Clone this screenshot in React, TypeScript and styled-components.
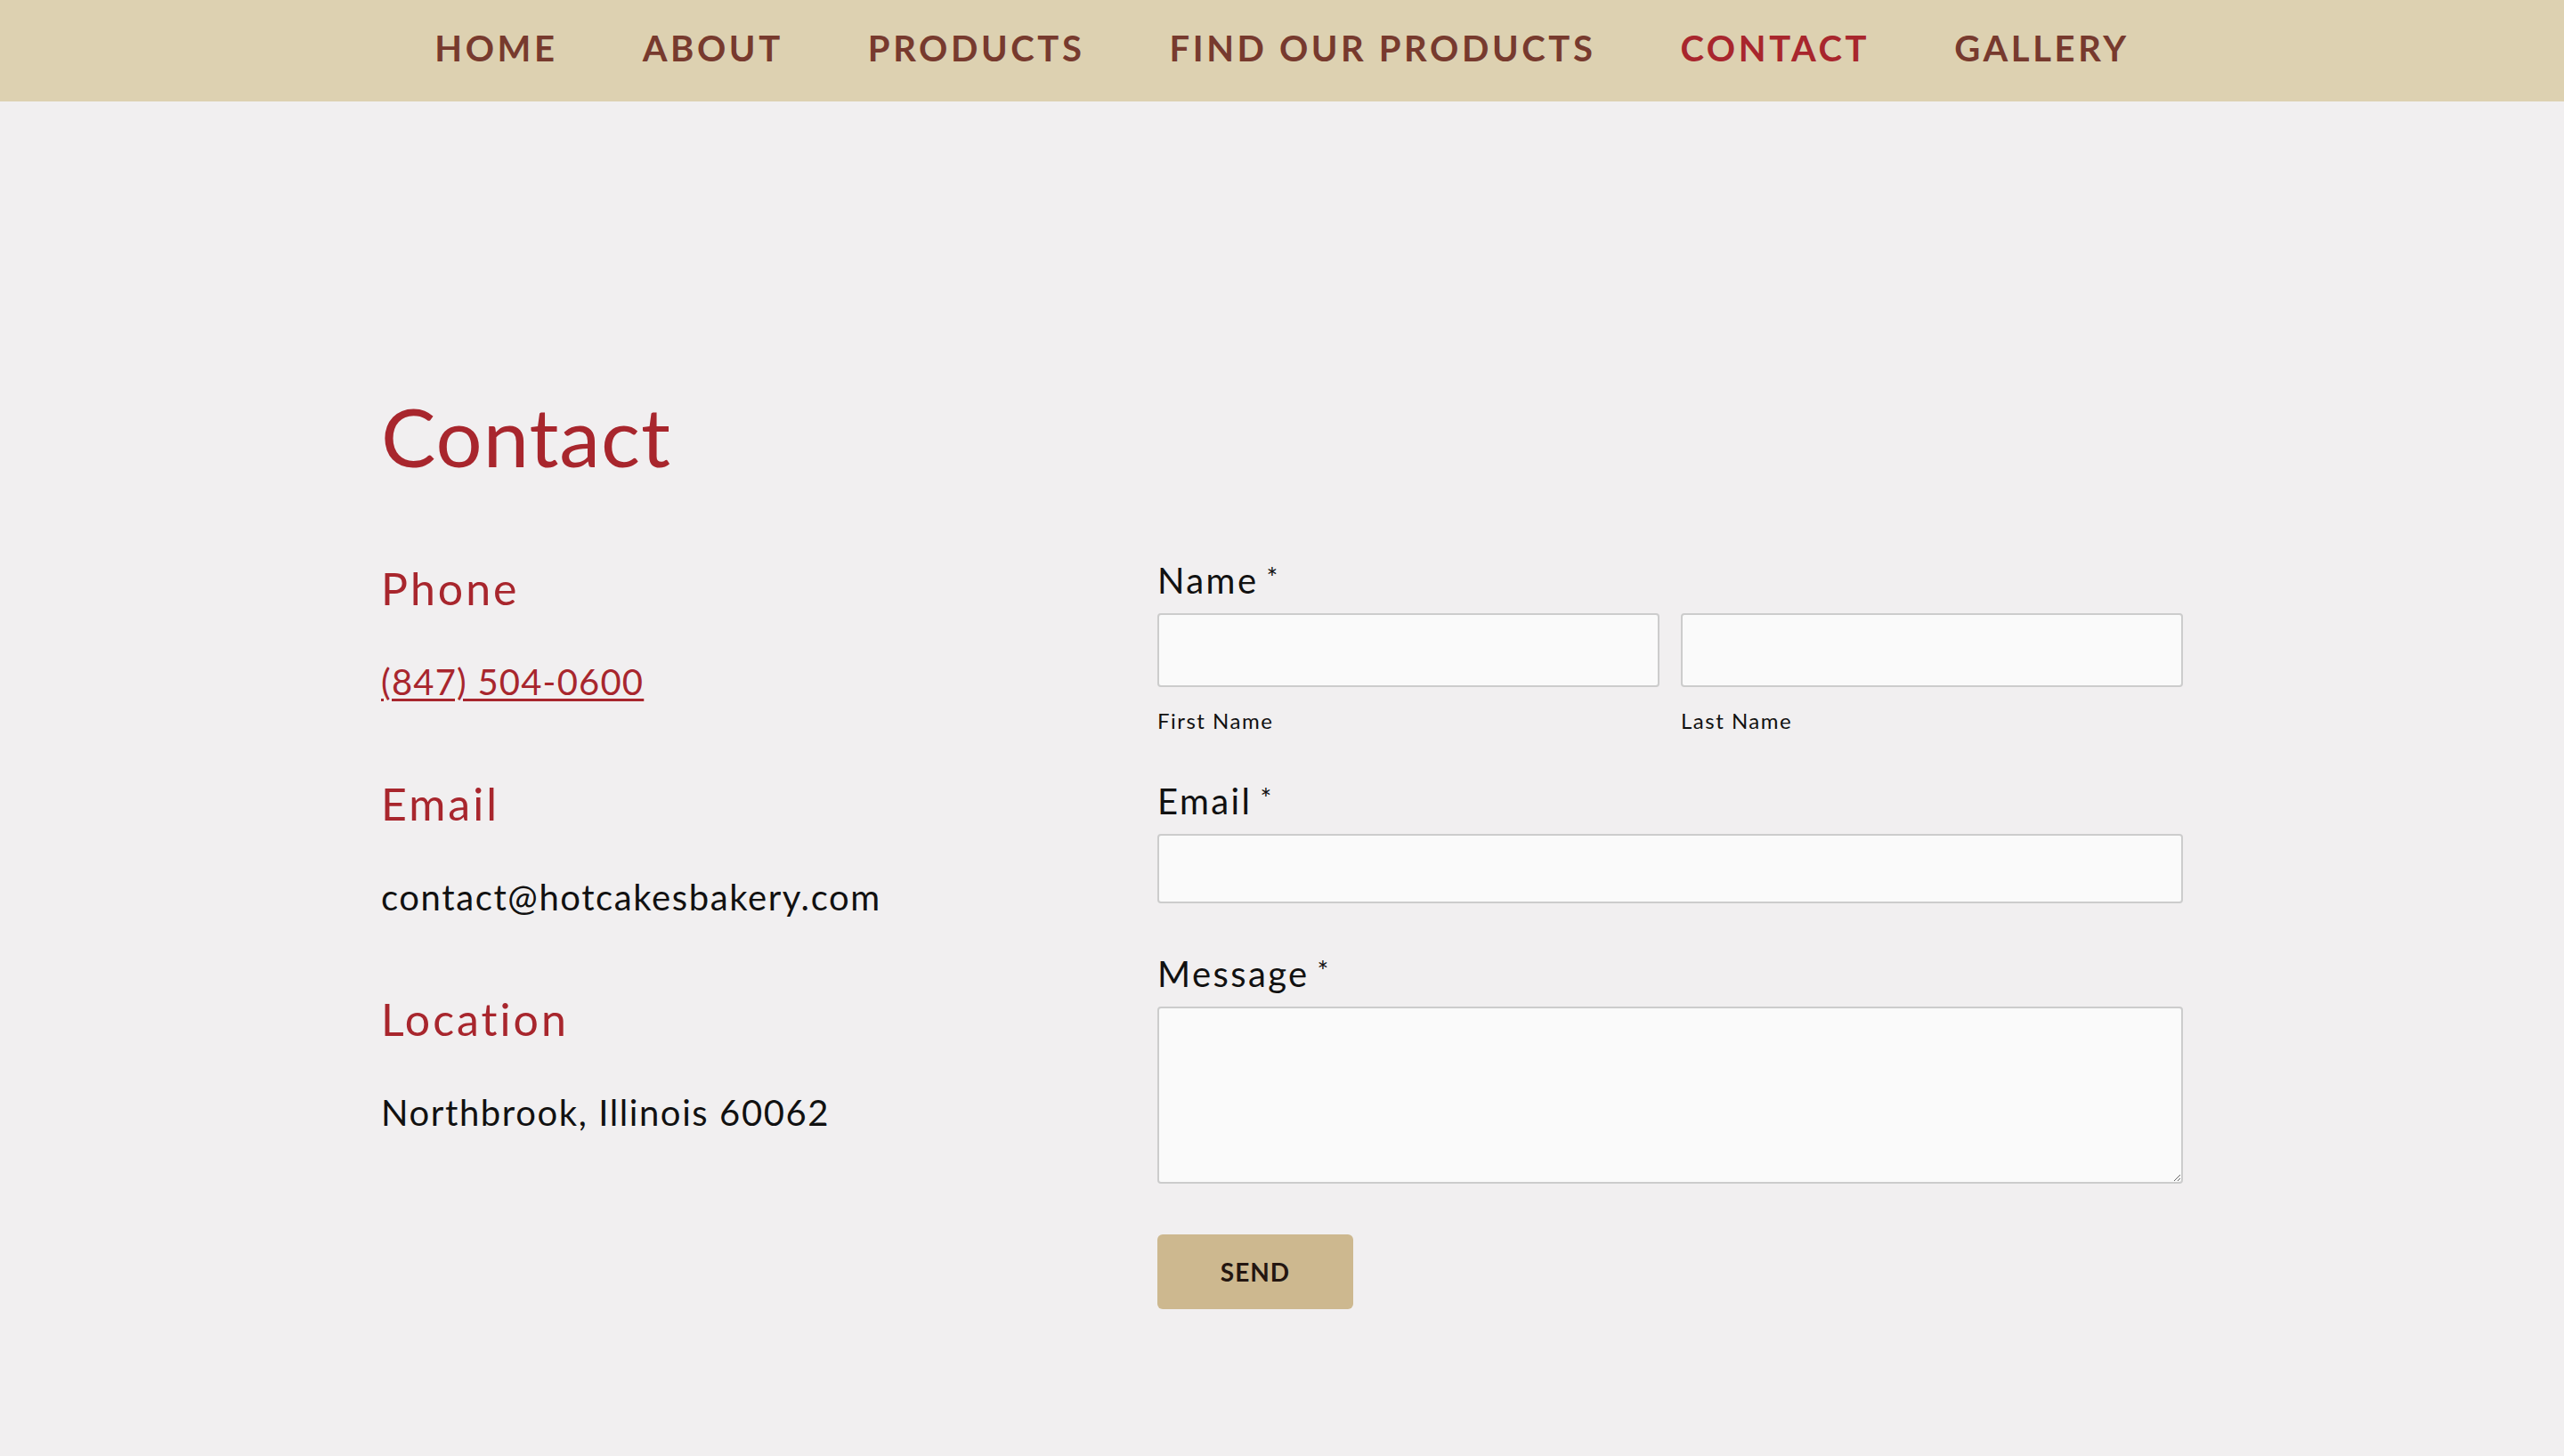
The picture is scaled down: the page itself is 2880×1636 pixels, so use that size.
import React from "react";
import styled, { createGlobalStyle } from "styled-components";

const Global = createGlobalStyle`
  html, body { margin: 0; padding: 0; }
  body {
    background: #f1eff0;
    font-family: Lato, "Liberation Sans", sans-serif;
    color: #111;
  }
  * { box-sizing: border-box; }
`;

const Page = styled.div`
  min-height: 100vh;
  background: #f1eff0;
`;

const NavBar = styled.nav`
  height: 114px;
  background: #ddd1b1;
  display: flex;
  justify-content: center;
  align-items: center;
  padding-bottom: 7px;
  gap: 95px;
`;

const NavLink = styled.a<{ $active?: boolean }>`
  font-family: Lato, "Liberation Sans", sans-serif;
  font-weight: 700;
  font-size: 40px;
  line-height: 40px;
  letter-spacing: 3.6px;
  text-transform: uppercase;
  text-decoration: none;
  color: ${(p) => (p.$active ? "#a8262d" : "#773a2e")};
`;

const Main = styled.main`
  width: 2024px;
  margin: 0 auto;
  padding-top: 330px;
  padding-bottom: 100px;
`;

const PageTitle = styled.h1`
  margin: 0 0 95px;
  font-weight: 400;
  font-size: 92px;
  line-height: 92px;
  letter-spacing: 1px;
  color: #a8262d;
`;

const Columns = styled.div`
  display: grid;
  grid-template-columns: 872px 1152px;
  align-items: start;
`;

const InfoColumn = styled.div`
  display: flex;
  flex-direction: column;
  gap: 83px;
`;

const InfoSection = styled.section`
  display: flex;
  flex-direction: column;
  gap: 51px;
`;

const InfoTitle = styled.h2`
  margin: 0;
  font-weight: 400;
  font-size: 50px;
  line-height: 60px;
  letter-spacing: 3px;
  color: #a8262d;
`;

const InfoValue = styled.p`
  margin: 0;
  font-size: 40px;
  line-height: 48px;
  letter-spacing: 1.6px;
  color: #111;
`;

const PhoneLink = styled.a`
  color: #a8262d;
  letter-spacing: 1.2px;
  text-decoration: underline;
  text-decoration-thickness: 3px;
  text-underline-offset: 4px;
`;

const Form = styled.form`
  display: flex;
  flex-direction: column;
  margin-top: -3px;
`;

const Field = styled.div<{ $space?: number }>`
  display: flex;
  flex-direction: column;
  gap: 13px;
  margin-top: ${(p) => p.$space ?? 0}px;
`;

const Label = styled.label`
  font-size: 40px;
  line-height: 48px;
  letter-spacing: 2.4px;
  color: #111;
`;

const Req = styled.span`
  font-size: 30px;
  line-height: 0;
  vertical-align: 7px;
  margin-left: 9px;
`;

const NameRow = styled.div`
  display: grid;
  grid-template-columns: 1fr 1fr;
  column-gap: 24px;
  row-gap: 23px;
`;

const Input = styled.input<{ $h: number }>`
  width: 100%;
  height: ${(p) => p.$h}px;
  background: #fafafa;
  border: 2px solid #cccccc;
  border-radius: 4px;
  font-size: 30px;
  padding: 0 16px;
  outline: none;
`;

const SubLabel = styled.span`
  font-size: 24px;
  line-height: 29px;
  letter-spacing: 1.5px;
  color: #111;
`;

const TextArea = styled.textarea`
  width: 100%;
  height: 199px;
  background: #fafafa;
  border: 2px solid #cccccc;
  border-radius: 4px;
  font-size: 30px;
  padding: 16px;
  outline: none;
  resize: vertical;
  display: block;
`;

const SendButton = styled.button`
  margin-top: 57px;
  width: 220px;
  height: 84px;
  border: none;
  border-radius: 6px;
  background: #cdb88f;
  color: #241611;
  font-family: Lato, "Liberation Sans", sans-serif;
  font-weight: 700;
  font-size: 28px;
  letter-spacing: 1px;
  text-transform: uppercase;
  cursor: pointer;
`;

const navItems = ["Home", "About", "Products", "Find Our Products", "Contact", "Gallery"];

export default function App() {
  return (
    <Page>
      <Global />
      <NavBar>
        {navItems.map((n) => (
          <NavLink key={n} href="#" $active={n === "Contact"}>
            {n}
          </NavLink>
        ))}
      </NavBar>
      <Main>
        <PageTitle>Contact</PageTitle>
        <Columns>
          <InfoColumn>
            <InfoSection>
              <InfoTitle>Phone</InfoTitle>
              <InfoValue>
                <PhoneLink href="#">(847) 504-0600</PhoneLink>
              </InfoValue>
            </InfoSection>
            <InfoSection>
              <InfoTitle>Email</InfoTitle>
              <InfoValue>contact@hotcakesbakery.com</InfoValue>
            </InfoSection>
            <InfoSection>
              <InfoTitle>Location</InfoTitle>
              <InfoValue>Northbrook, Illinois 60062</InfoValue>
            </InfoSection>
          </InfoColumn>
          <Form onSubmit={(e) => e.preventDefault()}>
            <Field>
              <Label>
                Name<Req>*</Req>
              </Label>
              <NameRow>
                <Input $h={83} aria-label="First Name" />
                <Input $h={83} aria-label="Last Name" />
                <SubLabel>First Name</SubLabel>
                <SubLabel>Last Name</SubLabel>
              </NameRow>
            </Field>
            <Field $space={52}>
              <Label>
                Email<Req>*</Req>
              </Label>
              <Input $h={78} type="email" />
            </Field>
            <Field $space={55}>
              <Label>
                Message<Req>*</Req>
              </Label>
              <TextArea />
            </Field>
            <div>
              <SendButton type="submit">Send</SendButton>
            </div>
          </Form>
        </Columns>
      </Main>
    </Page>
  );
}
